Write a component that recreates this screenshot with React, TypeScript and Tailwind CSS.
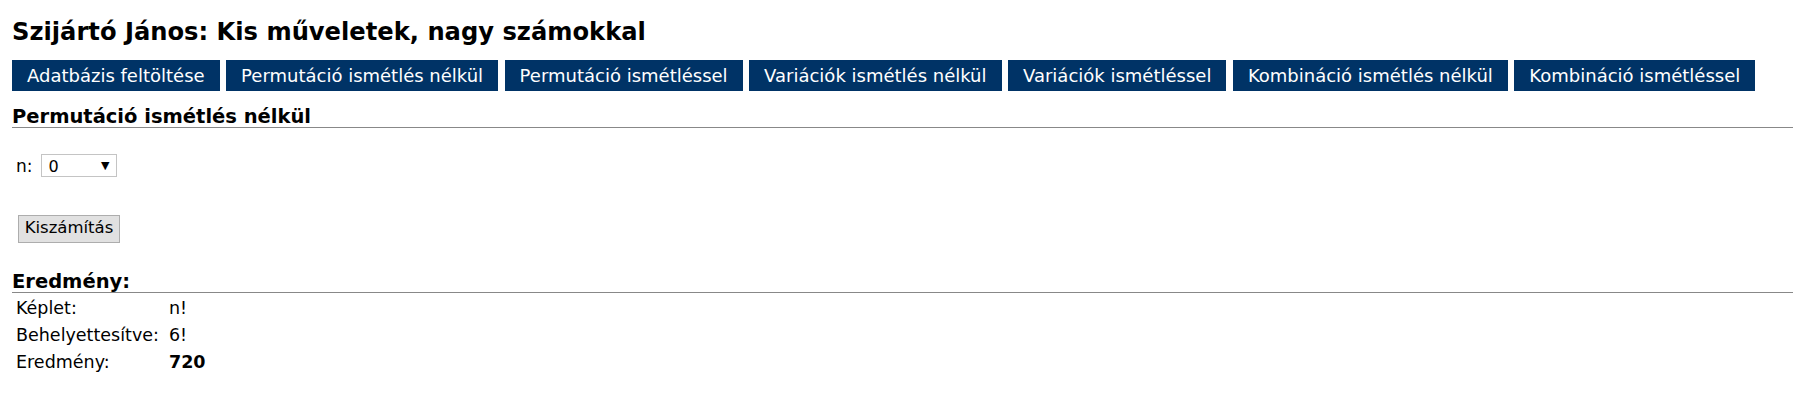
const menu = [
  'Adatbázis feltöltése',
  'Permutáció ismétlés nélkül',
  'Permutáció ismétléssel',
  'Variációk ismétlés nélkül',
  'Variációk ismétléssel',
  'Kombináció ismétlés nélkül',
  'Kombináció ismétléssel',
]

const rows: [string, string, boolean][] = [
  ['Képlet:', 'n!', false],
  ['Behelyettesítve:', '6!', false],
  ['Eredmény:', '720', true],
]

export default function App() {
  return (
    <div className="min-h-[400px] bg-white pl-3 font-['DejaVu_Sans',Verdana,sans-serif] text-black">
      <h1 className="pt-[19px] text-[24.2px] font-bold leading-[27px]">Szijártó János: Kis műveletek, nagy számokkal</h1>

      <nav className="mt-[14px] flex gap-[6.5px]">
        {menu.map((m) => (
          <button key={m} className="h-[31px] bg-[#003366] px-[15px] text-[18px] leading-none text-white">
            {m}
          </button>
        ))}
      </nav>

      <h2 className="mt-[15px] border-b border-[#888] text-[19.5px] font-bold leading-[21px]">Permutáció ismétlés nélkül</h2>

      <div className="mt-[26px] flex items-center gap-[8px] pl-[4px] text-[17px]">
        <span>n:</span>
        <div className="relative">
          <select className="h-[23px] w-[76px] appearance-none border border-[#c4c4c4] bg-white pl-[7px] text-[16px] outline-none">
            <option>0</option>
          </select>
          <span className="pointer-events-none absolute right-[7px] top-[4px] text-[11px]">▼</span>
        </div>
      </div>

      <button className="mt-[35px] ml-[6px] h-[28px] w-[102px] border border-[#adadad] bg-[#e1e1e1] text-[16.5px]">Kiszámítás</button>

      <h2 className="mt-[28px] border-b border-[#888] text-[19.5px] font-bold leading-[21px]">Eredmény:</h2>

      <table className="mt-[2px] text-[17.5px] leading-[27px]">
        <tbody>
          {rows.map(([k, v, b]) => (
            <tr key={k}>
              <td className="py-0 pl-[4px] pr-[10px]">{k}</td>
              <td className={b ? 'font-bold' : ''}>{v}</td>
            </tr>
          ))}
        </tbody>
      </table>
    </div>
  )
}
